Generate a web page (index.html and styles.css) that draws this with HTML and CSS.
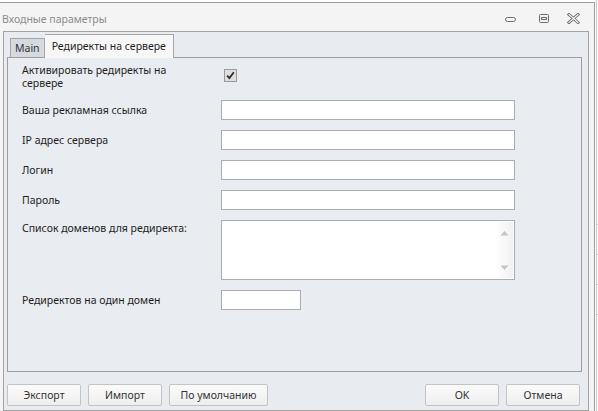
FILE: index.html
```html
<!DOCTYPE html>
<html>
<head>
<meta charset="utf-8">
<link rel="stylesheet" href="styles.css">
</head>
<body>
<div class="screen">
  <div class="window">
    <div class="titlebar">
      <span class="title">Входные параметры</span>
      <div class="controls">
        <svg class="ctl" width="13" height="10" viewBox="0 0 13 10"><rect x="1.5" y="3.5" width="10" height="4" rx="2" fill="none" stroke="#6d6d6d" stroke-width="1"/></svg>
        <svg class="ctl" width="12" height="11" viewBox="0 0 12 11"><rect x="1.5" y="1.5" width="9" height="8" rx="1" fill="none" stroke="#6d6d6d"/><rect x="3.5" y="4.5" width="5" height="2" fill="none" stroke="#6d6d6d"/></svg>
        <svg class="ctl" width="13" height="11" viewBox="0 0 13 11"><path d="M2 1.5 L11 9.5 M11 1.5 L2 9.5" stroke="#6d6d6d" stroke-width="3" stroke-linecap="square"/><path d="M2 1.5 L11 9.5 M11 1.5 L2 9.5" stroke="#f4f4f4" stroke-width="1.2" stroke-linecap="square"/></svg>
      </div>
    </div>
    <div class="frame">
      <div class="tabs">
        <div class="tab">Main</div>
        <div class="tab active">Редиректы на сервере</div>
      </div>
      <div class="panel">
        <div class="form">
          <div class="label two">Активировать редиректы на<br>сервере</div>
          <div class="cbwrap"><span class="checkbox"><svg width="9" height="9" viewBox="0 0 9 9"><path d="M1.2 4.6 L3.4 7 L7.8 1.3" fill="none" stroke="#2a2a2a" stroke-width="1.8"/></svg></span></div>

          <div class="label">Ваша рекламная ссылка</div>
          <div class="input"></div>

          <div class="label">IP адрес сервера</div>
          <div class="input"></div>

          <div class="label">Логин</div>
          <div class="input"></div>

          <div class="label">Пароль</div>
          <div class="input"></div>

          <div class="label top">Список доменов для редиректа:</div>
          <div class="textarea">
            <div class="scroll">
              <svg width="9" height="6" viewBox="0 0 9 6"><path d="M0.5 5.5 L4.5 1 L8.5 5.5 Z" fill="#c4c4c4"/></svg>
              <svg width="9" height="6" viewBox="0 0 9 6"><path d="M0.5 0.5 L4.5 5 L8.5 0.5 Z" fill="#c4c4c4"/></svg>
            </div>
          </div>

          <div class="label">Редиректов на один домен</div>
          <div class="input short"></div>
        </div>
      </div>
      <div class="buttons">
        <div class="btn">Экспорт</div>
        <div class="btn">Импорт</div>
        <div class="btn wide">По умолчанию</div>
        <div class="spacer"></div>
        <div class="btn">OK</div>
        <div class="btn">Отмена</div>
      </div>
    </div>
  </div>
  <div class="behind">
    <div class="bline"></div><div class="bline"></div><div class="bline"></div><div class="bline"></div>
  </div>
</div>
</body>
</html>
```
FILE: styles.css
```css
html, body {
  margin: 0;
  padding: 0;
  background: #ffffff;
}
body {
  font-family: "Noto Sans", "Open Sans", sans-serif;
  font-size: 10.5px;
  color: #1e1e1e;
}
.screen {
  display: flex;
  width: 598px;
  height: 411px;
  overflow: hidden;
}
.window {
  width: 594px;
  height: 409px;
  margin-top: 2px;
  border-top: 1px solid #9e9e9e;
  border-right: 1px solid #9e9e9e;
  background: #f4f4f4;
  display: flex;
  flex-direction: column;
}
.titlebar {
  height: 28px;
  display: flex;
  align-items: center;
  padding-left: 2px;
}
.title {
  color: #8c8c8c;
  font-size: 10.5px;
  margin-top: 3px;
}
.controls {
  margin-left: auto;
  display: flex;
  align-items: center;
  margin-top: 3px;
}
.ctl:nth-child(1) { margin-right: 21px; }
.ctl:nth-child(2) { margin-right: 17px; }
.ctl:nth-child(3) { margin-right: 14px; }
.frame {
  margin-left: 3px;
  width: 575px;
  height: 376px;
  border: 1px solid #a3a3a3;
  background: #e8ebef;
  display: flex;
  flex-direction: column;
  padding: 2px 6px 0 3px;
}
.tabs {
  display: flex;
  align-items: flex-end;
  height: 23px;
  padding-left: 3px;
  position: relative;
  z-index: 1;
}
.tab {
  height: 18px;
  line-height: 19px;
  padding: 0 4px;
  border: 1px solid #a6a6a6;
  border-bottom: none;
  background: #d6dae0;
  color: #333;
}
.tab.active {
  height: 23px;
  line-height: 22px;
  padding: 0 7px 0 7px;
  background: #f7f7f7;
  border-left: none;
  color: #1e1e1e;
  margin-bottom: -1px;
}
.panel {
  height: 307px;
  border: 1px solid #9d9d9d;
  background: #e9ecf0;
  padding: 6px 0 0 14px;
}
.form {
  display: grid;
  grid-template-columns: 199px 294px;
  grid-template-rows: 26px 20px 20px 20px 20px 60px 20px;
  row-gap: 10px;
}
.label {
  display: flex;
  align-items: center;
  line-height: 13px;
  white-space: nowrap;
  color: #1e1e1e;
}
.label.two {
  align-items: flex-start;
}
.label.top {
  align-items: flex-start;
  padding-top: 2px;
}
.cbwrap {
  padding: 5px 0 0 3px;
}
.checkbox {
  display: flex;
  align-items: center;
  justify-content: center;
  width: 11px;
  height: 11px;
  border: 1px solid #9a9a9a;
  background: #dedede;
}
.input {
  box-sizing: border-box;
  height: 20px;
  border: 1px solid #a9acb1;
  background: #ffffff;
}
.input.short {
  width: 80px;
}
.textarea {
  box-sizing: border-box;
  height: 60px;
  border: 1px solid #a9acb1;
  background: #ffffff;
  display: flex;
  justify-content: flex-end;
  padding: 1px;
}
.scroll {
  width: 18px;
  background: linear-gradient(to right, #ffffff, #f1f1f1);
  display: flex;
  flex-direction: column;
  justify-content: space-between;
  align-items: center;
  padding: 8px 0 7px;
}
.buttons {
  display: flex;
  margin-top: 12px;
  gap: 7px;
  padding-right: 2px;
}
.spacer { flex: 1; }
.btn {
  box-sizing: border-box;
  width: 74px;
  height: 22px;
  border: 1px solid #c3c3c3;
  border-radius: 2px;
  background: linear-gradient(#fbfbfb, #eeeeee);
  display: flex;
  align-items: center;
  justify-content: center;
  color: #333;
}
.btn.wide { width: 99px; }
.behind {
  flex: 1;
  background: #ffffff;
  border-left: 1px solid #c8c8c8;
  margin-left: 1px;
  display: flex;
  flex-direction: column;
  padding-top: 224px;
  gap: 29px;
}
.bline {
  height: 1px;
  background: #d0d0d0;
}
```
